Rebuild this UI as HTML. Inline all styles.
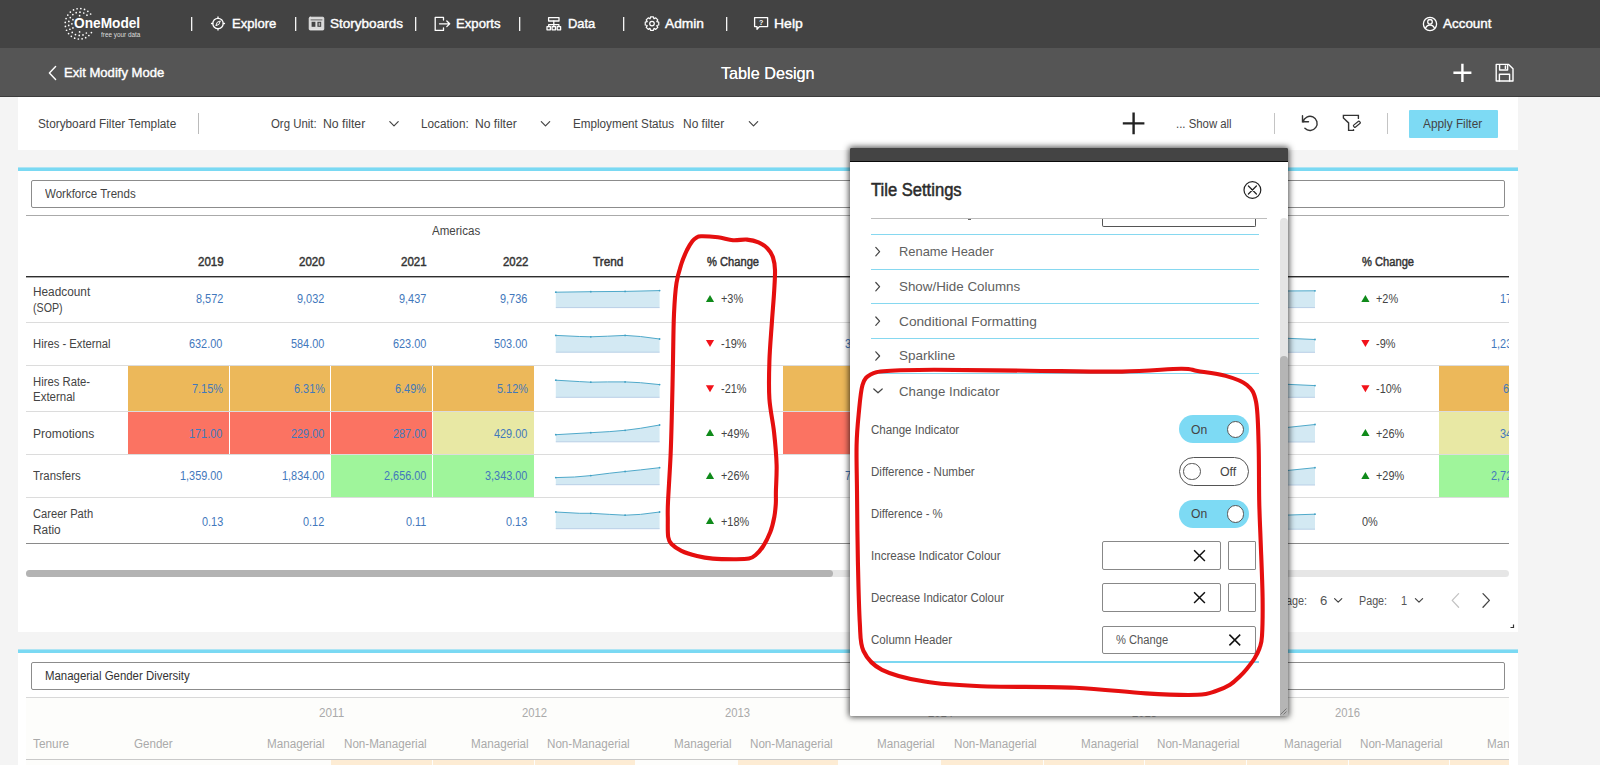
<!DOCTYPE html>
<html><head><meta charset="utf-8"><title>Table Design</title>
<style>
html,body{margin:0;padding:0;}
body{width:1600px;height:765px;overflow:hidden;background:#f4f4f4;font-family:"Liberation Sans",sans-serif;position:relative;}
.a{position:absolute;box-sizing:border-box;}
.t{position:absolute;white-space:nowrap;transform-origin:0 50%;display:block;}
svg{position:absolute;overflow:visible;}
</style></head><body>
<div class="a " style="left:0px;top:0px;width:1600px;height:48px;background:#434343;"></div>
<div class="a " style="left:0px;top:48px;width:1600px;height:49px;background:#555555;"></div>
<div class="a " style="left:0px;top:96px;width:1600px;height:1px;background:#3c3c3c;"></div>
<svg style="left:0;top:0" width="200" height="48" fill="#fff"><circle cx="91.40" cy="32.56" r="0.85"/><circle cx="88.86" cy="35.49" r="0.85"/><circle cx="85.69" cy="37.63" r="0.85"/><circle cx="82.10" cy="38.83" r="0.85"/><circle cx="78.34" cy="39.01" r="0.85"/><circle cx="74.67" cy="38.14" r="0.85"/><circle cx="71.34" cy="36.30" r="0.85"/><circle cx="68.57" cy="33.61" r="0.85"/><circle cx="66.55" cy="30.25" r="0.85"/><circle cx="65.42" cy="26.45" r="0.85"/><circle cx="65.25" cy="22.47" r="0.85"/><circle cx="66.07" cy="18.58" r="0.85"/><circle cx="67.80" cy="15.04" r="0.85"/><circle cx="70.34" cy="12.11" r="0.85"/><circle cx="73.51" cy="9.97" r="0.85"/><circle cx="77.10" cy="8.77" r="0.85"/><circle cx="80.86" cy="8.59" r="0.85"/><circle cx="84.53" cy="9.46" r="0.85"/><circle cx="87.86" cy="11.30" r="0.85"/><circle cx="90.63" cy="13.99" r="0.85"/><circle cx="86.37" cy="32.99" r="0.85"/><circle cx="83.00" cy="34.89" r="0.85"/><circle cx="79.22" cy="35.45" r="0.85"/><circle cx="75.48" cy="34.61" r="0.85"/><circle cx="72.24" cy="32.47" r="0.85"/><circle cx="69.89" cy="29.27" r="0.85"/><circle cx="68.71" cy="25.42" r="0.85"/><circle cx="68.84" cy="21.38" r="0.85"/><circle cx="70.27" cy="17.62" r="0.85"/><circle cx="72.83" cy="14.61" r="0.85"/><circle cx="76.20" cy="12.71" r="0.85"/><circle cx="79.98" cy="12.15" r="0.85"/><circle cx="83.72" cy="12.99" r="0.85"/><circle cx="86.96" cy="15.13" r="0.85"/><circle cx="79.60" cy="31.96" r="0.85"/><circle cx="72.93" cy="27.88" r="0.85"/><circle cx="71.90" cy="23.80" r="0.85"/><circle cx="72.93" cy="19.72" r="0.85"/><circle cx="79.60" cy="15.64" r="0.85"/></svg>
<span class="t" style="left:74.08px;top:12.00px;font-size:15px;line-height:21px;font-weight:bold;color:#fff;transform:scaleX(0.9127);">OneModel</span>
<span class="t" style="left:100.62px;top:30.00px;font-size:7px;line-height:10px;font-weight:normal;color:#ddd;transform:scaleX(0.9108);">free your data</span>
<div class="a " style="left:191px;top:16.5px;width:1px;height:14px;background:#f4f4f4;"></div>
<div class="a " style="left:192px;top:16.5px;width:1px;height:14px;background:rgba(255,255,255,0.3);"></div>
<div class="a " style="left:295px;top:16.5px;width:1px;height:14px;background:#f4f4f4;"></div>
<div class="a " style="left:296px;top:16.5px;width:1px;height:14px;background:rgba(255,255,255,0.3);"></div>
<div class="a " style="left:415px;top:16.5px;width:1px;height:14px;background:#f4f4f4;"></div>
<div class="a " style="left:416px;top:16.5px;width:1px;height:14px;background:rgba(255,255,255,0.3);"></div>
<div class="a " style="left:519px;top:16.5px;width:1px;height:14px;background:#f4f4f4;"></div>
<div class="a " style="left:520px;top:16.5px;width:1px;height:14px;background:rgba(255,255,255,0.3);"></div>
<div class="a " style="left:623px;top:16.5px;width:1px;height:14px;background:#f4f4f4;"></div>
<div class="a " style="left:624px;top:16.5px;width:1px;height:14px;background:rgba(255,255,255,0.3);"></div>
<div class="a " style="left:726px;top:16.5px;width:1px;height:14px;background:#f4f4f4;"></div>
<div class="a " style="left:727px;top:16.5px;width:1px;height:14px;background:rgba(255,255,255,0.3);"></div>
<svg style="left:0;top:0" width="1600" height="48" fill="none" stroke="#fff" stroke-width="1.3" stroke-linecap="round" stroke-linejoin="round"><circle cx="218" cy="23.5" r="5.2"/><path d="M218 17v1.2M218 28.8v1.2M211.5 23.5h1.2M223.3 23.5h1.2"/><path d="M220.2 21.3l-1.3 3.1-3.1 1.3 1.3-3.1z" stroke-width="1"/><rect x="309.2" y="17.2" width="14.6" height="12.8" rx="1" fill="#dcdcdc" stroke="#eee" stroke-width="0.8"/><path d="M311 19.9h11" stroke="#434343" stroke-width="0.8"/><rect x="311.6" y="21.8" width="3.8" height="5" fill="#434343" stroke="none"/><rect x="317.4" y="21.8" width="3.8" height="5" fill="#434343" stroke="none"/><rect x="318.6" y="22.8" width="1.6" height="3" fill="#aaa" stroke="none"/><path d="M443.5 20v-2.6h-8.3v13h8.3v-2.6"/><path d="M439.5 23.8h10M446.8 21l2.9 2.8-2.9 2.8"/><rect x="548.6" y="17.6" width="10.4" height="3.4"/><path d="M553.8 21v3.6M548.7 26.6v-2h10.2v2M553.8 24.6v2"/><rect x="547" y="26.6" width="3.4" height="3.2"/><rect x="552.1" y="26.6" width="3.4" height="3.2"/><rect x="557.2" y="26.6" width="3.4" height="3.2"/><path d="M754.6 17.6h13v9h-8.2l-2.4 2.6v-2.6h-2.4z"/><circle cx="1430" cy="24" r="6.6"/><circle cx="1430" cy="21.8" r="2.3"/><path d="M1425.4 28.4c1-2.6 2.8-3.4 4.6-3.4s3.6 0.8 4.6 3.4"/></svg>
<span class="t" style="left:758.98px;top:18.00px;font-size:7px;line-height:10px;font-weight:bold;color:#fff;transform:scaleX(1.0069);">?</span>
<svg style="left:0;top:0" width="1600" height="48" fill="none" stroke="#fff" stroke-width="1.2" stroke-linejoin="round"><path d="M658.75 22.16 L658.75 25.04 L656.83 25.53 L656.78 25.65 L657.79 27.35 L655.75 29.39 L654.05 28.38 L653.93 28.43 L653.44 30.35 L650.56 30.35 L650.07 28.43 L649.95 28.38 L648.25 29.39 L646.21 27.35 L647.22 25.65 L647.17 25.53 L645.25 25.04 L645.25 22.16 L647.17 21.67 L647.22 21.55 L646.21 19.85 L648.25 17.81 L649.95 18.82 L650.07 18.77 L650.56 16.85 L653.44 16.85 L653.93 18.77 L654.05 18.82 L655.75 17.81 L657.79 19.85 L656.78 21.55 L656.83 21.67Z"/><circle cx="652" cy="23.6" r="2.3"/></svg>
<span class="t" style="left:232.22px;top:15.00px;font-size:13px;line-height:18px;font-weight:normal;color:#fff;transform:scaleX(1.0052);-webkit-text-stroke:0.4px #fff;">Explore</span>
<span class="t" style="left:329.59px;top:15.00px;font-size:13px;line-height:18px;font-weight:normal;color:#fff;transform:scaleX(1.0409);-webkit-text-stroke:0.4px #fff;">Storyboards</span>
<span class="t" style="left:456.01px;top:15.00px;font-size:13px;line-height:18px;font-weight:normal;color:#fff;transform:scaleX(1.0101);-webkit-text-stroke:0.4px #fff;">Exports</span>
<span class="t" style="left:567.62px;top:15.00px;font-size:13px;line-height:18px;font-weight:normal;color:#fff;transform:scaleX(0.9939);-webkit-text-stroke:0.4px #fff;">Data</span>
<span class="t" style="left:665.17px;top:15.00px;font-size:13px;line-height:18px;font-weight:normal;color:#fff;transform:scaleX(1.0578);-webkit-text-stroke:0.4px #fff;">Admin</span>
<span class="t" style="left:774.16px;top:15.00px;font-size:13px;line-height:18px;font-weight:normal;color:#fff;transform:scaleX(1.0772);-webkit-text-stroke:0.4px #fff;">Help</span>
<span class="t" style="left:1442.99px;top:15.00px;font-size:13px;line-height:18px;font-weight:normal;color:#fff;transform:scaleX(1.0335);-webkit-text-stroke:0.4px #fff;">Account</span>
<svg style="left:0;top:48px" width="1600" height="49" fill="none" stroke="#fff" stroke-linecap="round" stroke-linejoin="round"><path d="M55.6 18.4l-6.2 6.6 6.2 6.6" stroke-width="1.4"/><path d="M1462.4 15.8v18.2M1453.4 24.8h18" stroke-width="2.4" stroke-linecap="butt"/><path d="M1496.2 16.4h12.4l4.4 4.4v12.2h-16.8z" stroke-width="1.4"/><path d="M1499.6 16.6v5.4h8v-5.4M1499.4 33v-6.8h10.2v6.8" stroke-width="1.4"/><path d="M1505.4 18v2.4" stroke-width="1.4"/></svg>
<span class="t" style="left:63.72px;top:64.00px;font-size:13px;line-height:18px;font-weight:normal;color:#fff;transform:scaleX(1.0061);-webkit-text-stroke:0.4px #fff;">Exit Modify Mode</span>
<span class="t" style="left:721.03px;top:62.00px;font-size:17px;line-height:24px;font-weight:normal;color:#fff;transform:scaleX(0.9526);text-shadow:0 0 0.5px #fff;">Table Design</span>
<div class="a " style="left:18px;top:97px;width:1500px;height:53px;background:#fff;"></div>
<span class="t" style="left:38.29px;top:116.00px;font-size:12px;line-height:17px;font-weight:normal;color:#444;transform:scaleX(0.9835);">Storyboard Filter Template</span>
<div class="a " style="left:197.5px;top:113px;width:1px;height:21px;background:#bbb;"></div>
<span class="t" style="left:271.32px;top:116.00px;font-size:12px;line-height:17px;font-weight:normal;color:#444;transform:scaleX(0.9507);">Org Unit:</span>
<span class="t" style="left:323.26px;top:116.00px;font-size:12px;line-height:17px;font-weight:normal;color:#444;transform:scaleX(1.0214);">No filter</span>
<span class="t" style="left:421.30px;top:116.00px;font-size:12px;line-height:17px;font-weight:normal;color:#444;transform:scaleX(0.9790);">Location:</span>
<span class="t" style="left:475.27px;top:116.00px;font-size:12px;line-height:17px;font-weight:normal;color:#444;transform:scaleX(1.0089);">No filter</span>
<span class="t" style="left:573.30px;top:116.00px;font-size:12px;line-height:17px;font-weight:normal;color:#444;transform:scaleX(0.9724);">Employment Status</span>
<span class="t" style="left:682.78px;top:116.00px;font-size:12px;line-height:17px;font-weight:normal;color:#444;transform:scaleX(0.9965);">No filter</span>
<svg style="left:0;top:0" width="1600" height="160" fill="none" stroke="#444" stroke-width="1.2" stroke-linecap="round" stroke-linejoin="round"><path d="M389.8 121.6l4.2 4.2 4.2-4.2"/><path d="M541.3 121.6l4.2 4.2 4.2-4.2"/><path d="M749.3 121.6l4.2 4.2 4.2-4.2"/><path d="M1133.6 112.6v21.6M1122.8 123.4h21.6" stroke="#222" stroke-width="2.4" stroke-linecap="butt"/><path d="M1303.1 121.8A7.1 7.1 0 1 1 1304.9 128.3" stroke="#333" stroke-width="1.4"/><path d="M1302.5 115.8v6h6" stroke="#333" stroke-width="1.4" stroke-linejoin="miter"/><path d="M1358.4 118.4V115.4H1343.4V118L1348.6 122.9V130.4H1353.5V129.6" stroke="#333" stroke-width="1.4" stroke-linejoin="miter"/><rect x="-3.8" y="-1.3" width="7.6" height="2.6" rx="0.7" transform="translate(1356.9 124.2) rotate(-39)" stroke="#333" stroke-width="1.2"/></svg>
<span class="t" style="left:1175.82px;top:116.00px;font-size:12px;line-height:17px;font-weight:normal;color:#444;transform:scaleX(0.9480);">... Show all</span>
<div class="a " style="left:1274px;top:113px;width:1px;height:21px;background:#c4c4c4;"></div>
<div class="a " style="left:1387px;top:113px;width:1px;height:21px;background:#c4c4c4;"></div>
<div class="a " style="left:1409px;top:109.5px;width:88.5px;height:28px;background:#7ddaf4;border-radius:1px;"></div>
<span class="t" style="left:1423.29px;top:116.00px;font-size:12px;line-height:17px;font-weight:normal;color:#444;transform:scaleX(0.9861);">Apply Filter</span>
<div class="a " style="left:18px;top:167px;width:1500px;height:465px;background:#fff;"></div>
<div class="a " style="left:18px;top:167px;width:1500px;height:1px;background:#aee4f3;"></div>
<div class="a " style="left:18px;top:168px;width:1500px;height:3px;background:#7ad9f3;"></div>
<div class="a " style="left:31px;top:180px;width:1474px;height:28px;background:#fff;border:1px solid #8c8c8c;border-radius:2px;"></div>
<span class="t" style="left:45.31px;top:186.00px;font-size:12px;line-height:17px;font-weight:normal;color:#444;transform:scaleX(0.9596);">Workforce Trends</span>
<div class="a " style="left:26px;top:214.5px;width:1483px;height:1px;background:#aaa;"></div>
<div class="a" style="left:26px;top:216px;width:1483px;height:340px;overflow:hidden;">
<span class="t" style="left:169.54px;top:75.00px;font-size:12px;line-height:17px;font-weight:normal;color:#4278bc;transform:scaleX(0.9080);">8,572</span>
<span class="t" style="left:271.14px;top:75.00px;font-size:12px;line-height:17px;font-weight:normal;color:#4278bc;transform:scaleX(0.9080);">9,032</span>
<span class="t" style="left:372.74px;top:75.00px;font-size:12px;line-height:17px;font-weight:normal;color:#4278bc;transform:scaleX(0.9080);">9,437</span>
<span class="t" style="left:474.34px;top:75.00px;font-size:12px;line-height:17px;font-weight:normal;color:#4278bc;transform:scaleX(0.9080);">9,736</span>
<span class="t" style="left:163.48px;top:120.00px;font-size:12px;line-height:17px;font-weight:normal;color:#4278bc;transform:scaleX(0.9080);">632.00</span>
<span class="t" style="left:265.08px;top:120.00px;font-size:12px;line-height:17px;font-weight:normal;color:#4278bc;transform:scaleX(0.9080);">584.00</span>
<span class="t" style="left:366.68px;top:120.00px;font-size:12px;line-height:17px;font-weight:normal;color:#4278bc;transform:scaleX(0.9080);">623.00</span>
<span class="t" style="left:468.28px;top:120.00px;font-size:12px;line-height:17px;font-weight:normal;color:#4278bc;transform:scaleX(0.9080);">503.00</span>
<div class="a " style="left:102px;top:149px;width:101px;height:46px;background:#ecb85a;"></div>
<span class="t" style="left:165.91px;top:165.00px;font-size:12px;line-height:17px;font-weight:normal;color:#4278bc;transform:scaleX(0.9080);">7.15%</span>
<div class="a " style="left:204px;top:149px;width:100px;height:46px;background:#ecb85a;"></div>
<span class="t" style="left:267.51px;top:165.00px;font-size:12px;line-height:17px;font-weight:normal;color:#4278bc;transform:scaleX(0.9080);">6.31%</span>
<div class="a " style="left:305px;top:149px;width:101px;height:46px;background:#ecb85a;"></div>
<span class="t" style="left:369.11px;top:165.00px;font-size:12px;line-height:17px;font-weight:normal;color:#4278bc;transform:scaleX(0.9080);">6.49%</span>
<div class="a " style="left:407px;top:149px;width:101px;height:46px;background:#ecb85a;"></div>
<span class="t" style="left:470.71px;top:165.00px;font-size:12px;line-height:17px;font-weight:normal;color:#4278bc;transform:scaleX(0.9080);">5.12%</span>
<div class="a " style="left:102px;top:195px;width:101px;height:43px;background:#fb7362;"></div>
<span class="t" style="left:163.48px;top:210.00px;font-size:12px;line-height:17px;font-weight:normal;color:#4278bc;transform:scaleX(0.9080);">171.00</span>
<div class="a " style="left:204px;top:195px;width:100px;height:43px;background:#fb7362;"></div>
<span class="t" style="left:265.08px;top:210.00px;font-size:12px;line-height:17px;font-weight:normal;color:#4278bc;transform:scaleX(0.9080);">229.00</span>
<div class="a " style="left:305px;top:195px;width:101px;height:43px;background:#fb7362;"></div>
<span class="t" style="left:366.68px;top:210.00px;font-size:12px;line-height:17px;font-weight:normal;color:#4278bc;transform:scaleX(0.9080);">287.00</span>
<div class="a " style="left:407px;top:195px;width:101px;height:43px;background:#e8e8a4;"></div>
<span class="t" style="left:468.28px;top:210.00px;font-size:12px;line-height:17px;font-weight:normal;color:#4278bc;transform:scaleX(0.9080);">429.00</span>
<span class="t" style="left:154.39px;top:252.00px;font-size:12px;line-height:17px;font-weight:normal;color:#4278bc;transform:scaleX(0.9080);">1,359.00</span>
<span class="t" style="left:255.99px;top:252.00px;font-size:12px;line-height:17px;font-weight:normal;color:#4278bc;transform:scaleX(0.9080);">1,834.00</span>
<div class="a " style="left:305px;top:238px;width:101px;height:43px;background:#9ff59b;"></div>
<span class="t" style="left:357.59px;top:252.00px;font-size:12px;line-height:17px;font-weight:normal;color:#4278bc;transform:scaleX(0.9080);">2,656.00</span>
<div class="a " style="left:407px;top:238px;width:101px;height:43px;background:#9ff59b;"></div>
<span class="t" style="left:459.19px;top:252.00px;font-size:12px;line-height:17px;font-weight:normal;color:#4278bc;transform:scaleX(0.9080);">3,343.00</span>
<span class="t" style="left:175.60px;top:298.00px;font-size:12px;line-height:17px;font-weight:normal;color:#4278bc;transform:scaleX(0.9080);">0.13</span>
<span class="t" style="left:277.20px;top:298.00px;font-size:12px;line-height:17px;font-weight:normal;color:#4278bc;transform:scaleX(0.9080);">0.12</span>
<span class="t" style="left:379.60px;top:298.00px;font-size:12px;line-height:17px;font-weight:normal;color:#4278bc;transform:scaleX(0.9080);">0.11</span>
<span class="t" style="left:480.40px;top:298.00px;font-size:12px;line-height:17px;font-weight:normal;color:#4278bc;transform:scaleX(0.9080);">0.13</span>
<span class="t" style="left:824.94px;top:75.00px;font-size:12px;line-height:17px;font-weight:normal;color:#4278bc;transform:scaleX(0.9080);">4,120</span>
<span class="t" style="left:818.88px;top:120.00px;font-size:12px;line-height:17px;font-weight:normal;color:#4278bc;transform:scaleX(0.9080);">384.00</span>
<div class="a " style="left:757px;top:149px;width:101px;height:46px;background:#ecb85a;"></div>
<span class="t" style="left:827.37px;top:165.00px;font-size:12px;line-height:17px;font-weight:normal;color:#4278bc;transform:scaleX(0.9080);">8.1%</span>
<div class="a " style="left:859px;top:149px;width:101px;height:46px;background:#ecb85a;"></div>
<div class="a " style="left:961px;top:149px;width:100px;height:46px;background:#ecb85a;"></div>
<div class="a " style="left:1062px;top:149px;width:102px;height:46px;background:#ecb85a;"></div>
<div class="a " style="left:757px;top:195px;width:101px;height:43px;background:#fb7362;"></div>
<span class="t" style="left:824.94px;top:210.00px;font-size:12px;line-height:17px;font-weight:normal;color:#4278bc;transform:scaleX(0.9080);">85.00</span>
<div class="a " style="left:859px;top:195px;width:101px;height:43px;background:#fb7362;"></div>
<div class="a " style="left:961px;top:195px;width:100px;height:43px;background:#fb7362;"></div>
<div class="a " style="left:1062px;top:195px;width:102px;height:43px;background:#fb7362;"></div>
<span class="t" style="left:818.88px;top:252.00px;font-size:12px;line-height:17px;font-weight:normal;color:#4278bc;transform:scaleX(0.9080);">712.00</span>
<span class="t" style="left:831.00px;top:298.00px;font-size:12px;line-height:17px;font-weight:normal;color:#4278bc;transform:scaleX(0.9080);">0.09</span>
<span class="t" style="left:1474.28px;top:75.00px;font-size:12px;line-height:17px;font-weight:normal;color:#4278bc;transform:scaleX(0.9080);">17,654</span>
<span class="t" style="left:1465.19px;top:120.00px;font-size:12px;line-height:17px;font-weight:normal;color:#4278bc;transform:scaleX(0.9080);">1,234.00</span>
<div class="a " style="left:1413px;top:149px;width:100px;height:46px;background:#ecb85a;"></div>
<span class="t" style="left:1476.71px;top:165.00px;font-size:12px;line-height:17px;font-weight:normal;color:#4278bc;transform:scaleX(0.9080);">6.99%</span>
<div class="a " style="left:1514px;top:149px;width:101px;height:46px;background:#ecb85a;"></div>
<div class="a " style="left:1616px;top:149px;width:101px;height:46px;background:#ecb85a;"></div>
<div class="a " style="left:1718px;top:149px;width:101px;height:46px;background:#ecb85a;"></div>
<div class="a " style="left:1413px;top:195px;width:100px;height:43px;background:#e8e8a4;"></div>
<span class="t" style="left:1474.28px;top:210.00px;font-size:12px;line-height:17px;font-weight:normal;color:#4278bc;transform:scaleX(0.9080);">341.00</span>
<div class="a " style="left:1514px;top:195px;width:101px;height:43px;background:#e8e8a4;"></div>
<div class="a " style="left:1616px;top:195px;width:101px;height:43px;background:#e8e8a4;"></div>
<div class="a " style="left:1718px;top:195px;width:101px;height:43px;background:#e8e8a4;"></div>
<div class="a " style="left:1413px;top:238px;width:100px;height:43px;background:#9ff59b;"></div>
<span class="t" style="left:1465.19px;top:252.00px;font-size:12px;line-height:17px;font-weight:normal;color:#4278bc;transform:scaleX(0.9080);">2,721.00</span>
<div class="a " style="left:1514px;top:238px;width:101px;height:43px;background:#9ff59b;"></div>
<div class="a " style="left:1616px;top:238px;width:101px;height:43px;background:#9ff59b;"></div>
<div class="a " style="left:1718px;top:238px;width:101px;height:43px;background:#9ff59b;"></div>
<span class="t" style="left:1487.20px;top:298.00px;font-size:12px;line-height:17px;font-weight:normal;color:#4278bc;transform:scaleX(0.9080);">0.11</span>
<div class="a " style="left:0px;top:106px;width:1483px;height:1px;background:#dcdcdc;"></div>
<div class="a " style="left:0px;top:149px;width:1483px;height:1px;background:#dcdcdc;"></div>
<div class="a " style="left:0px;top:195px;width:1483px;height:1px;background:#dcdcdc;"></div>
<div class="a " style="left:0px;top:238px;width:1483px;height:1px;background:#dcdcdc;"></div>
<div class="a " style="left:0px;top:281px;width:1483px;height:1px;background:#dcdcdc;"></div>
<div class="a " style="left:0px;top:327px;width:1483px;height:1px;background:#8a8a8a;"></div>
<div class="a " style="left:0px;top:60px;width:1483px;height:1px;background:#2e2e2e;"></div>
<div class="a " style="left:0px;top:61px;width:1483px;height:1px;background:#a8a8a8;"></div>
<span class="t" style="left:405.81px;top:7.00px;font-size:12px;line-height:17px;font-weight:normal;color:#444;transform:scaleX(0.9630);">Americas</span>
<span class="t" style="left:171.81px;top:38.00px;font-size:12px;line-height:17px;font-weight:normal;color:#333;transform:scaleX(0.9611);-webkit-text-stroke:0.45px #333;">2019</span>
<span class="t" style="left:273.31px;top:38.00px;font-size:12px;line-height:17px;font-weight:normal;color:#333;transform:scaleX(0.9611);-webkit-text-stroke:0.45px #333;">2020</span>
<span class="t" style="left:374.81px;top:38.00px;font-size:12px;line-height:17px;font-weight:normal;color:#333;transform:scaleX(0.9611);-webkit-text-stroke:0.45px #333;">2021</span>
<span class="t" style="left:476.62px;top:38.00px;font-size:12px;line-height:17px;font-weight:normal;color:#333;transform:scaleX(0.9493);-webkit-text-stroke:0.45px #333;">2022</span>
<span class="t" style="left:567.09px;top:38.00px;font-size:12px;line-height:17px;font-weight:normal;color:#333;transform:scaleX(0.9832);-webkit-text-stroke:0.45px #333;">Trend</span>
<span class="t" style="left:680.73px;top:38.00px;font-size:12px;line-height:17px;font-weight:normal;color:#333;transform:scaleX(0.9282);-webkit-text-stroke:0.45px #333;">% Change</span>
<span class="t" style="left:1335.73px;top:38.00px;font-size:12px;line-height:17px;font-weight:normal;color:#333;transform:scaleX(0.9282);-webkit-text-stroke:0.45px #333;">% Change</span>
<span class="t" style="left:7.29px;top:68.00px;font-size:12px;line-height:17px;font-weight:normal;color:#444;transform:scaleX(0.9852);">Headcount</span>
<span class="t" style="left:7.36px;top:84.00px;font-size:12px;line-height:17px;font-weight:normal;color:#444;transform:scaleX(0.8869);">(SOP)</span>
<span class="t" style="left:7.32px;top:120.00px;font-size:12px;line-height:17px;font-weight:normal;color:#444;transform:scaleX(0.9388);">Hires - External</span>
<span class="t" style="left:7.32px;top:158.00px;font-size:12px;line-height:17px;font-weight:normal;color:#444;transform:scaleX(0.9415);">Hires Rate-</span>
<span class="t" style="left:7.31px;top:173.00px;font-size:12px;line-height:17px;font-weight:normal;color:#444;transform:scaleX(0.9575);">External</span>
<span class="t" style="left:7.27px;top:210.00px;font-size:12px;line-height:17px;font-weight:normal;color:#444;transform:scaleX(1.0086);">Promotions</span>
<span class="t" style="left:7.32px;top:252.00px;font-size:12px;line-height:17px;font-weight:normal;color:#444;transform:scaleX(0.9484);">Transfers</span>
<span class="t" style="left:7.33px;top:290.00px;font-size:12px;line-height:17px;font-weight:normal;color:#444;transform:scaleX(0.9292);">Career Path</span>
<span class="t" style="left:7.29px;top:306.00px;font-size:12px;line-height:17px;font-weight:normal;color:#444;transform:scaleX(0.9883);">Ratio</span>
<svg style="left:0;top:0" width="1483" height="340"><path d="M529.8 76.2 L564.8 75.7 L599.1 75.4 L633.6 74.6 L633.6 91.6 L529.8 91.6Z" fill="#d3e9f3" stroke="none"/><path d="M529.8 91.6H633.6" stroke="#b9cfe6" stroke-width="1"/><path d="M529.8 76.2 L564.8 75.7 L599.1 75.4 L633.6 74.6" fill="none" stroke="#4fa9ca" stroke-width="1"/><circle cx="529.8" cy="76.2" r="0.9" fill="#3fa0c4" stroke="none"/><circle cx="564.8" cy="75.7" r="0.9" fill="#3fa0c4" stroke="none"/><circle cx="599.1" cy="75.4" r="0.9" fill="#3fa0c4" stroke="none"/><circle cx="633.6" cy="74.6" r="0.9" fill="#3fa0c4" stroke="none"/><path d="M679.9 85.99999999999997h8.2l-4.1-7z" fill="#0f8a1a"/><path d="M529.8 119.4 L553.7 120.5 L564.8 120.8 L581.7 120.2 L599.1 119.4 L614.4 120.5 L633.6 123.0 L633.6 136.2 L529.8 136.2Z" fill="#d3e9f3" stroke="none"/><path d="M529.8 136.2H633.6" stroke="#b9cfe6" stroke-width="1"/><path d="M529.8 119.4 L553.7 120.5 L564.8 120.8 L581.7 120.2 L599.1 119.4 L614.4 120.5 L633.6 123.0" fill="none" stroke="#4fa9ca" stroke-width="1"/><circle cx="529.8" cy="119.4" r="0.9" fill="#3fa0c4" stroke="none"/><circle cx="564.8" cy="120.8" r="0.9" fill="#3fa0c4" stroke="none"/><circle cx="599.1" cy="119.4" r="0.9" fill="#3fa0c4" stroke="none"/><circle cx="633.6" cy="123.0" r="0.9" fill="#3fa0c4" stroke="none"/><path d="M679.9 124.1h8.2l-4.1 7z" fill="#f2121a"/><path d="M529.8 164.2 L553.7 165.6 L564.8 166.2 L581.7 165.9 L599.1 165.9 L614.4 166.7 L633.6 168.6 L633.6 181.3 L529.8 181.3Z" fill="#d3e9f3" stroke="none"/><path d="M529.8 181.3H633.6" stroke="#b9cfe6" stroke-width="1"/><path d="M529.8 164.2 L553.7 165.6 L564.8 166.2 L581.7 165.9 L599.1 165.9 L614.4 166.7 L633.6 168.6" fill="none" stroke="#4fa9ca" stroke-width="1"/><circle cx="529.8" cy="164.2" r="0.9" fill="#3fa0c4" stroke="none"/><circle cx="564.8" cy="166.2" r="0.9" fill="#3fa0c4" stroke="none"/><circle cx="599.1" cy="165.9" r="0.9" fill="#3fa0c4" stroke="none"/><circle cx="633.6" cy="168.6" r="0.9" fill="#3fa0c4" stroke="none"/><path d="M679.9 169.20000000000002h8.2l-4.1 7z" fill="#f2121a"/><path d="M529.8 218.7 L564.8 216.7 L583.8 215.6 L599.1 214.3 L614.4 212.3 L633.6 209.0 L633.6 225.8 L529.8 225.8Z" fill="#d3e9f3" stroke="none"/><path d="M529.8 225.8H633.6" stroke="#b9cfe6" stroke-width="1"/><path d="M529.8 218.7 L564.8 216.7 L583.8 215.6 L599.1 214.3 L614.4 212.3 L633.6 209.0" fill="none" stroke="#4fa9ca" stroke-width="1"/><circle cx="529.8" cy="218.7" r="0.9" fill="#3fa0c4" stroke="none"/><circle cx="564.8" cy="216.7" r="0.9" fill="#3fa0c4" stroke="none"/><circle cx="599.1" cy="214.3" r="0.9" fill="#3fa0c4" stroke="none"/><circle cx="633.6" cy="209.0" r="0.9" fill="#3fa0c4" stroke="none"/><path d="M679.9 220.1h8.2l-4.1-7z" fill="#0f8a1a"/><path d="M529.8 261.6 L548.5 261.0 L564.8 259.6 L583.8 257.2 L599.1 255.5 L614.4 253.9 L633.6 251.7 L633.6 268.7 L529.8 268.7Z" fill="#d3e9f3" stroke="none"/><path d="M529.8 268.7H633.6" stroke="#b9cfe6" stroke-width="1"/><path d="M529.8 261.6 L548.5 261.0 L564.8 259.6 L583.8 257.2 L599.1 255.5 L614.4 253.9 L633.6 251.7" fill="none" stroke="#4fa9ca" stroke-width="1"/><circle cx="529.8" cy="261.6" r="0.9" fill="#3fa0c4" stroke="none"/><circle cx="564.8" cy="259.6" r="0.9" fill="#3fa0c4" stroke="none"/><circle cx="599.1" cy="255.5" r="0.9" fill="#3fa0c4" stroke="none"/><circle cx="633.6" cy="251.7" r="0.9" fill="#3fa0c4" stroke="none"/><path d="M679.9 263.1h8.2l-4.1-7z" fill="#0f8a1a"/><path d="M529.8 296.0 L553.7 297.3 L564.8 297.3 L583.8 298.4 L599.1 299.2 L614.4 298.4 L633.6 296.0 L633.6 312.7 L529.8 312.7Z" fill="#d3e9f3" stroke="none"/><path d="M529.8 312.7H633.6" stroke="#b9cfe6" stroke-width="1"/><path d="M529.8 296.0 L553.7 297.3 L564.8 297.3 L583.8 298.4 L599.1 299.2 L614.4 298.4 L633.6 296.0" fill="none" stroke="#4fa9ca" stroke-width="1"/><circle cx="529.8" cy="296.0" r="0.9" fill="#3fa0c4" stroke="none"/><circle cx="564.8" cy="297.3" r="0.9" fill="#3fa0c4" stroke="none"/><circle cx="599.1" cy="299.2" r="0.9" fill="#3fa0c4" stroke="none"/><circle cx="633.6" cy="296.0" r="0.9" fill="#3fa0c4" stroke="none"/><path d="M679.9 308.1h8.2l-4.1-7z" fill="#0f8a1a"/><path d="M1185.2 75.6 L1254.5 75.0 L1289.0 74.8 L1289.0 91.6 L1185.2 91.6Z" fill="#d3e9f3" stroke="none"/><path d="M1185.1999999999998 91.6H1289.0" stroke="#b9cfe6" stroke-width="1"/><path d="M1185.2 75.6 L1254.5 75.0 L1289.0 74.8" fill="none" stroke="#4fa9ca" stroke-width="1"/><circle cx="1185.2" cy="75.6" r="0.9" fill="#3fa0c4" stroke="none"/><circle cx="1254.5" cy="75.0" r="0.9" fill="#3fa0c4" stroke="none"/><circle cx="1289.0" cy="74.8" r="0.9" fill="#3fa0c4" stroke="none"/><path d="M1335.3000000000002 85.99999999999997h8.2l-4.1-7z" fill="#0f8a1a"/><path d="M1185.2 120.0 L1254.5 122.0 L1289.0 123.5 L1289.0 136.3 L1185.2 136.3Z" fill="#d3e9f3" stroke="none"/><path d="M1185.1999999999998 136.3H1289.0" stroke="#b9cfe6" stroke-width="1"/><path d="M1185.2 120.0 L1254.5 122.0 L1289.0 123.5" fill="none" stroke="#4fa9ca" stroke-width="1"/><circle cx="1185.2" cy="120.0" r="0.9" fill="#3fa0c4" stroke="none"/><circle cx="1254.5" cy="122.0" r="0.9" fill="#3fa0c4" stroke="none"/><circle cx="1289.0" cy="123.5" r="0.9" fill="#3fa0c4" stroke="none"/><path d="M1335.3000000000002 124.1h8.2l-4.1 7z" fill="#f2121a"/><path d="M1185.2 166.0 L1254.5 168.0 L1289.0 169.6 L1289.0 181.3 L1185.2 181.3Z" fill="#d3e9f3" stroke="none"/><path d="M1185.1999999999998 181.3H1289.0" stroke="#b9cfe6" stroke-width="1"/><path d="M1185.2 166.0 L1254.5 168.0 L1289.0 169.6" fill="none" stroke="#4fa9ca" stroke-width="1"/><circle cx="1185.2" cy="166.0" r="0.9" fill="#3fa0c4" stroke="none"/><circle cx="1254.5" cy="168.0" r="0.9" fill="#3fa0c4" stroke="none"/><circle cx="1289.0" cy="169.6" r="0.9" fill="#3fa0c4" stroke="none"/><path d="M1335.3000000000002 169.20000000000002h8.2l-4.1 7z" fill="#f2121a"/><path d="M1185.2 217.0 L1254.5 212.2 L1289.0 208.5 L1289.0 226 L1185.2 226Z" fill="#d3e9f3" stroke="none"/><path d="M1185.1999999999998 226H1289.0" stroke="#b9cfe6" stroke-width="1"/><path d="M1185.2 217.0 L1254.5 212.2 L1289.0 208.5" fill="none" stroke="#4fa9ca" stroke-width="1"/><circle cx="1185.2" cy="217.0" r="0.9" fill="#3fa0c4" stroke="none"/><circle cx="1254.5" cy="212.2" r="0.9" fill="#3fa0c4" stroke="none"/><circle cx="1289.0" cy="208.5" r="0.9" fill="#3fa0c4" stroke="none"/><path d="M1335.3000000000002 220.1h8.2l-4.1-7z" fill="#0f8a1a"/><path d="M1185.2 260.0 L1254.5 255.2 L1289.0 251.7 L1289.0 269 L1185.2 269Z" fill="#d3e9f3" stroke="none"/><path d="M1185.1999999999998 269H1289.0" stroke="#b9cfe6" stroke-width="1"/><path d="M1185.2 260.0 L1254.5 255.2 L1289.0 251.7" fill="none" stroke="#4fa9ca" stroke-width="1"/><circle cx="1185.2" cy="260.0" r="0.9" fill="#3fa0c4" stroke="none"/><circle cx="1254.5" cy="255.2" r="0.9" fill="#3fa0c4" stroke="none"/><circle cx="1289.0" cy="251.7" r="0.9" fill="#3fa0c4" stroke="none"/><path d="M1335.3000000000002 263.1h8.2l-4.1-7z" fill="#0f8a1a"/><path d="M1185.2 300.0 L1254.5 299.3 L1289.0 298.2 L1289.0 313.2 L1185.2 313.2Z" fill="#d3e9f3" stroke="none"/><path d="M1185.1999999999998 313.2H1289.0" stroke="#b9cfe6" stroke-width="1"/><path d="M1185.2 300.0 L1254.5 299.3 L1289.0 298.2" fill="none" stroke="#4fa9ca" stroke-width="1"/><circle cx="1185.2" cy="300.0" r="0.9" fill="#3fa0c4" stroke="none"/><circle cx="1254.5" cy="299.3" r="0.9" fill="#3fa0c4" stroke="none"/><circle cx="1289.0" cy="298.2" r="0.9" fill="#3fa0c4" stroke="none"/></svg>
<span class="t" style="left:694.60px;top:75.00px;font-size:12px;line-height:17px;font-weight:normal;color:#444;transform:scaleX(0.9080);">+3%</span>
<span class="t" style="left:694.60px;top:120.00px;font-size:12px;line-height:17px;font-weight:normal;color:#444;transform:scaleX(0.9080);">-19%</span>
<span class="t" style="left:694.60px;top:165.00px;font-size:12px;line-height:17px;font-weight:normal;color:#444;transform:scaleX(0.9080);">-21%</span>
<span class="t" style="left:694.60px;top:210.00px;font-size:12px;line-height:17px;font-weight:normal;color:#444;transform:scaleX(0.9080);">+49%</span>
<span class="t" style="left:694.60px;top:252.00px;font-size:12px;line-height:17px;font-weight:normal;color:#444;transform:scaleX(0.9080);">+26%</span>
<span class="t" style="left:694.60px;top:298.00px;font-size:12px;line-height:17px;font-weight:normal;color:#444;transform:scaleX(0.9080);">+18%</span>
<span class="t" style="left:1350.00px;top:75.00px;font-size:12px;line-height:17px;font-weight:normal;color:#444;transform:scaleX(0.9080);">+2%</span>
<span class="t" style="left:1350.00px;top:120.00px;font-size:12px;line-height:17px;font-weight:normal;color:#444;transform:scaleX(0.9080);">-9%</span>
<span class="t" style="left:1350.00px;top:165.00px;font-size:12px;line-height:17px;font-weight:normal;color:#444;transform:scaleX(0.9080);">-10%</span>
<span class="t" style="left:1350.00px;top:210.00px;font-size:12px;line-height:17px;font-weight:normal;color:#444;transform:scaleX(0.9080);">+26%</span>
<span class="t" style="left:1350.00px;top:252.00px;font-size:12px;line-height:17px;font-weight:normal;color:#444;transform:scaleX(0.9080);">+29%</span>
<span class="t" style="left:1335.90px;top:298.00px;font-size:12px;line-height:17px;font-weight:normal;color:#444;transform:scaleX(0.9080);">0%</span>
</div>
<div class="a " style="left:26px;top:570px;width:1483px;height:7px;background:#e6e6e6;border-radius:4px;"></div>
<div class="a " style="left:26px;top:570px;width:807px;height:7px;background:#b3b3b3;border-radius:4px;"></div>
<span class="t" style="left:1231.35px;top:593.00px;font-size:12px;line-height:17px;font-weight:normal;color:#555;transform:scaleX(0.9053);">Rows per page:</span>
<span class="t" style="left:1319.71px;top:593.00px;font-size:12px;line-height:17px;font-weight:normal;color:#555;transform:scaleX(1.0963);">6</span>
<span class="t" style="left:1359.36px;top:593.00px;font-size:12px;line-height:17px;font-weight:normal;color:#555;transform:scaleX(0.8953);">Page:</span>
<span class="t" style="left:1401.34px;top:593.00px;font-size:12px;line-height:17px;font-weight:normal;color:#555;transform:scaleX(0.9136);">1</span>
<svg style="left:0;top:560px" width="1600" height="80" fill="none" stroke-linecap="round" stroke-linejoin="round"><path d="M1334.6 38.6l3.6 3.6 3.6-3.6M1415.4 38.6l3.6 3.6 3.6-3.6" stroke="#444" stroke-width="1.2"/><path d="M1458.6 33.6l-6.4 6.8 6.4 6.8" stroke="#c4c4c4" stroke-width="1.3"/><path d="M1483 33.6l6.4 6.8-6.4 6.8" stroke="#444" stroke-width="1.3"/><path d="M1513.5 64.5v3h-3" stroke="#333" stroke-width="1.2" stroke-linecap="butt" stroke-linejoin="miter"/></svg>
<div class="a " style="left:18px;top:649px;width:1500px;height:116px;background:#fff;"></div>
<div class="a " style="left:18px;top:649px;width:1500px;height:1px;background:#aee4f3;"></div>
<div class="a " style="left:18px;top:650px;width:1500px;height:3px;background:#7ad9f3;"></div>
<div class="a " style="left:31px;top:662px;width:1474px;height:28px;background:#fff;border:1px solid #8c8c8c;border-radius:2px;"></div>
<span class="t" style="left:45.32px;top:668.00px;font-size:12px;line-height:17px;font-weight:normal;color:#333;transform:scaleX(0.9513);">Managerial Gender Diversity</span>
<div class="a " style="left:26px;top:697px;width:1483px;height:1px;background:#d8d8d8;"></div>
<div class="a" style="left:26px;top:698px;width:1483px;height:67px;overflow:hidden;background:#fdfdfb;">
<div class="a " style="left:0px;top:61px;width:1483px;height:1px;background:#c9c9c9;"></div>
<div class="a " style="left:305px;top:62px;width:101px;height:6px;background:#fdecd4;"></div>
<div class="a " style="left:407px;top:62px;width:101px;height:6px;background:#fdecd4;"></div>
<div class="a " style="left:509px;top:62px;width:100px;height:6px;background:#fdecd4;"></div>
<div class="a " style="left:712px;top:62px;width:100px;height:6px;background:#fdecd4;"></div>
<div class="a " style="left:915px;top:62px;width:102px;height:6px;background:#fdecd4;"></div>
<div class="a " style="left:1018px;top:62px;width:100px;height:6px;background:#fdecd4;"></div>
<div class="a " style="left:1119px;top:62px;width:101px;height:6px;background:#fdecd4;"></div>
<div class="a " style="left:1221px;top:62px;width:101px;height:6px;background:#fdecd4;"></div>
<div class="a " style="left:1323px;top:62px;width:100px;height:6px;background:#fdecd4;"></div>
<div class="a " style="left:1424px;top:62px;width:59px;height:6px;background:#fdecd4;"></div>
<span class="t" style="left:292.50px;top:7.00px;font-size:12px;line-height:17px;font-weight:normal;color:#aaa;transform:scaleX(0.9755);">2011</span>
<span class="t" style="left:495.82px;top:7.00px;font-size:12px;line-height:17px;font-weight:normal;color:#aaa;transform:scaleX(0.9415);">2012</span>
<span class="t" style="left:699.12px;top:7.00px;font-size:12px;line-height:17px;font-weight:normal;color:#aaa;transform:scaleX(0.9415);">2013</span>
<span class="t" style="left:902.42px;top:7.00px;font-size:12px;line-height:17px;font-weight:normal;color:#aaa;transform:scaleX(0.9415);">2014</span>
<span class="t" style="left:1105.72px;top:7.00px;font-size:12px;line-height:17px;font-weight:normal;color:#aaa;transform:scaleX(0.9415);">2015</span>
<span class="t" style="left:1309.02px;top:7.00px;font-size:12px;line-height:17px;font-weight:normal;color:#aaa;transform:scaleX(0.9415);">2016</span>
<span class="t" style="left:7.29px;top:38.00px;font-size:12px;line-height:17px;font-weight:normal;color:#aaa;transform:scaleX(0.9862);">Tenure</span>
<span class="t" style="left:108.30px;top:38.00px;font-size:12px;line-height:17px;font-weight:normal;color:#aaa;transform:scaleX(0.9660);">Gender</span>
<span class="t" style="left:241.30px;top:38.00px;font-size:12px;line-height:17px;font-weight:normal;color:#aaa;transform:scaleX(0.9714);">Managerial</span>
<span class="t" style="left:317.80px;top:38.00px;font-size:12px;line-height:17px;font-weight:normal;color:#aaa;transform:scaleX(0.9683);">Non-Managerial</span>
<span class="t" style="left:444.60px;top:38.00px;font-size:12px;line-height:17px;font-weight:normal;color:#aaa;transform:scaleX(0.9714);">Managerial</span>
<span class="t" style="left:521.10px;top:38.00px;font-size:12px;line-height:17px;font-weight:normal;color:#aaa;transform:scaleX(0.9683);">Non-Managerial</span>
<span class="t" style="left:647.90px;top:38.00px;font-size:12px;line-height:17px;font-weight:normal;color:#aaa;transform:scaleX(0.9714);">Managerial</span>
<span class="t" style="left:724.40px;top:38.00px;font-size:12px;line-height:17px;font-weight:normal;color:#aaa;transform:scaleX(0.9683);">Non-Managerial</span>
<span class="t" style="left:851.20px;top:38.00px;font-size:12px;line-height:17px;font-weight:normal;color:#aaa;transform:scaleX(0.9714);">Managerial</span>
<span class="t" style="left:927.70px;top:38.00px;font-size:12px;line-height:17px;font-weight:normal;color:#aaa;transform:scaleX(0.9683);">Non-Managerial</span>
<span class="t" style="left:1054.50px;top:38.00px;font-size:12px;line-height:17px;font-weight:normal;color:#aaa;transform:scaleX(0.9714);">Managerial</span>
<span class="t" style="left:1131.00px;top:38.00px;font-size:12px;line-height:17px;font-weight:normal;color:#aaa;transform:scaleX(0.9683);">Non-Managerial</span>
<span class="t" style="left:1257.80px;top:38.00px;font-size:12px;line-height:17px;font-weight:normal;color:#aaa;transform:scaleX(0.9714);">Managerial</span>
<span class="t" style="left:1334.30px;top:38.00px;font-size:12px;line-height:17px;font-weight:normal;color:#aaa;transform:scaleX(0.9683);">Non-Managerial</span>
<span class="t" style="left:1461.10px;top:38.00px;font-size:12px;line-height:17px;font-weight:normal;color:#aaa;transform:scaleX(0.9714);">Managerial</span>
</div>
<div class="a " style="left:850px;top:148px;width:438px;height:568px;background:#fff;box-shadow:0 0 6px 0.5px rgba(0,0,0,0.72);border-radius:1px;"></div>
<div class="a " style="left:850px;top:148px;width:438px;height:13px;background:#444;border-radius:1px 1px 0 0;"></div>
<div class="a " style="left:850px;top:161px;width:438px;height:1px;background:#0a0a0a;"></div>
<span class="t" style="left:870.50px;top:178.00px;font-size:17.5px;line-height:24px;font-weight:normal;color:#2b2b2b;transform:scaleX(0.9479);-webkit-text-stroke:0.5px #2b2b2b;">Tile Settings</span>
<svg style="left:0;top:0" width="1600" height="765" fill="none" stroke-linecap="round" stroke-linejoin="round"><circle cx="1252.4" cy="190" r="8.4" stroke="#222" stroke-width="1.2"/><path d="M1248.4 186l8 8M1256.4 186l-8 8" stroke="#222" stroke-width="1.2"/></svg>
<div class="a " style="left:871px;top:218px;width:396px;height:1px;background:#bdbdbd;"></div>
<div class="a " style="left:1102px;top:213px;width:154px;height:14px;background:#fff;border:1px solid #555;border-top:none;border-radius:0 0 2px 2px;"></div>
<div class="a " style="left:1102px;top:212px;width:154px;height:6px;background:#fff;"></div>
<div class="a " style="left:871px;top:218px;width:396px;height:1px;background:#bdbdbd;"></div>
<div class="a " style="left:967.5px;top:218.6px;width:3px;height:1.6px;background:#666;"></div>
<div class="a " style="left:871px;top:233.5px;width:388px;height:1.2px;background:#86d8f0;"></div>
<div class="a " style="left:871px;top:268.5px;width:388px;height:1.2px;background:#86d8f0;"></div>
<div class="a " style="left:871px;top:303.0px;width:388px;height:1.2px;background:#86d8f0;"></div>
<div class="a " style="left:871px;top:337.5px;width:388px;height:1.2px;background:#86d8f0;"></div>
<div class="a " style="left:871px;top:372.5px;width:388px;height:1.2px;background:#86d8f0;"></div>
<div class="a " style="left:871px;top:661px;width:388px;height:2px;background:#7cd7f1;"></div>
<span class="t" style="left:898.83px;top:242.00px;font-size:13.5px;line-height:19px;font-weight:normal;color:#606060;transform:scaleX(0.9560);">Rename Header</span>
<span class="t" style="left:898.80px;top:277.00px;font-size:13.5px;line-height:19px;font-weight:normal;color:#606060;transform:scaleX(0.9913);">Show/Hide Columns</span>
<span class="t" style="left:898.78px;top:312.00px;font-size:13.5px;line-height:19px;font-weight:normal;color:#606060;transform:scaleX(1.0144);">Conditional Formatting</span>
<span class="t" style="left:898.79px;top:346.00px;font-size:13.5px;line-height:19px;font-weight:normal;color:#606060;transform:scaleX(0.9995);">Sparkline</span>
<span class="t" style="left:898.81px;top:382.00px;font-size:13.5px;line-height:19px;font-weight:normal;color:#606060;transform:scaleX(0.9797);">Change Indicator</span>
<svg style="left:0;top:0" width="1600" height="765" fill="none" stroke="#444" stroke-width="1.2" stroke-linecap="round" stroke-linejoin="round"><path d="M875.8 247.4l3.8 4.2-3.8 4.2"/><path d="M875.8 282.5l3.8 4.2-3.8 4.2"/><path d="M875.8 317.0l3.8 4.2-3.8 4.2"/><path d="M875.8 351.8l3.8 4.2-3.8 4.2"/><path d="M873.8 389l4.2 3.8 4.2-3.8"/></svg>
<span class="t" style="left:870.81px;top:422.00px;font-size:12px;line-height:17px;font-weight:normal;color:#555;transform:scaleX(0.9647);">Change Indicator</span>
<span class="t" style="left:870.81px;top:464.00px;font-size:12px;line-height:17px;font-weight:normal;color:#555;transform:scaleX(0.9614);">Difference - Number</span>
<span class="t" style="left:870.82px;top:506.00px;font-size:12px;line-height:17px;font-weight:normal;color:#555;transform:scaleX(0.9450);">Difference - %</span>
<span class="t" style="left:870.80px;top:548.00px;font-size:12px;line-height:17px;font-weight:normal;color:#555;transform:scaleX(0.9672);">Increase Indicator Colour</span>
<span class="t" style="left:870.81px;top:590.00px;font-size:12px;line-height:17px;font-weight:normal;color:#555;transform:scaleX(0.9552);">Decrease Indicator Colour</span>
<span class="t" style="left:870.80px;top:632.00px;font-size:12px;line-height:17px;font-weight:normal;color:#555;transform:scaleX(0.9658);">Column Header</span>
<div class="a " style="left:1179px;top:415px;width:69.5px;height:28px;background:#7ddaf4;border-radius:14px;"></div>
<div class="a " style="left:1227px;top:420.7px;width:17.4px;height:17.4px;background:#fff;border-radius:50%;border:1px solid #555;"></div>
<span class="t" style="left:1191.27px;top:422.00px;font-size:12px;line-height:17px;font-weight:normal;color:#444;transform:scaleX(1.0130);">On</span>
<div class="a " style="left:1179px;top:457px;width:69.5px;height:29px;background:#fff;border-radius:14.5px;border:1px solid #555;"></div>
<div class="a " style="left:1183.3px;top:462.90000000000003px;width:17.4px;height:17.4px;background:#fff;border-radius:50%;border:1px solid #555;"></div>
<span class="t" style="left:1219.76px;top:464.00px;font-size:12px;line-height:17px;font-weight:normal;color:#444;transform:scaleX(1.0285);">Off</span>
<div class="a " style="left:1179px;top:500px;width:69.5px;height:28px;background:#7ddaf4;border-radius:14px;"></div>
<div class="a " style="left:1227px;top:505.3px;width:17.4px;height:17.4px;background:#fff;border-radius:50%;border:1px solid #555;"></div>
<span class="t" style="left:1191.27px;top:506.00px;font-size:12px;line-height:17px;font-weight:normal;color:#444;transform:scaleX(1.0130);">On</span>
<div class="a " style="left:1102px;top:541px;width:119px;height:29px;background:#fff;border:1px solid #888;border-radius:2px;"></div>
<div class="a " style="left:1227.5px;top:541px;width:28.5px;height:29px;background:#fff;border:1px solid #888;border-radius:1px;"></div>
<div class="a " style="left:1102px;top:583px;width:119px;height:29px;background:#fff;border:1px solid #888;border-radius:2px;"></div>
<div class="a " style="left:1227.5px;top:583px;width:28.5px;height:29px;background:#fff;border:1px solid #888;border-radius:1px;"></div>
<div class="a " style="left:1102px;top:625.5px;width:154px;height:28.5px;background:#fff;border:1px solid #888;border-radius:2px;"></div>
<span class="t" style="left:1116.33px;top:632.00px;font-size:12px;line-height:17px;font-weight:normal;color:#555;transform:scaleX(0.9300);">% Change</span>
<svg style="left:0;top:0" width="1600" height="765" fill="none" stroke="#111" stroke-width="1.5" stroke-linecap="butt"><path d="M1194.1 550.2l10.8 10.8M1204.9 550.2l-10.8 10.8"/><path d="M1194.1 592.2l10.8 10.8M1204.9 592.2l-10.8 10.8"/><path d="M1229.3999999999999 634.6l10.8 10.8M1240.2 634.6l-10.8 10.8"/></svg>
<div class="a " style="left:1280px;top:218px;width:8px;height:498px;background:#e4e4e4;border-radius:4px 4px 0 0;"></div>
<div class="a " style="left:1280px;top:356px;width:8px;height:360px;background:#b5b5b5;border-radius:4px 4px 0 0;"></div>
<svg style="left:0;top:0" width="1600" height="765" fill="none" stroke="#777" stroke-width="1"><path d="M1280.5 714.5l6-6M1283.5 714.5l3-3"/></svg>
<svg style="left:0;top:0" width="1600" height="765" fill="none" stroke="#e50f0f" stroke-width="4.1" stroke-linecap="round" stroke-linejoin="round"><path d="M701.0 236.3 C704.6 236.2 712.7 236.7 718.0 237.3 C723.3 238.0 728.2 239.8 733.0 240.2 C737.8 240.6 742.8 239.2 747.0 239.6 C751.2 240.0 755.1 240.9 758.5 242.4 C761.9 243.9 765.1 246.0 767.5 248.5 C769.9 251.0 771.8 253.9 773.0 257.5 C774.2 261.1 774.8 264.5 775.0 270.0 C775.2 275.5 774.7 281.7 774.2 290.6 C773.7 299.5 772.6 311.8 771.8 323.5 C771.0 335.2 769.8 348.4 769.4 361.0 C769.0 373.6 768.6 387.0 769.4 398.8 C770.2 410.6 772.8 420.8 774.0 431.8 C775.2 442.8 776.3 454.7 776.6 464.7 C776.9 474.7 776.0 485.4 775.9 492.0 C775.8 498.6 776.1 499.8 775.8 504.0 C775.5 508.2 775.2 512.3 774.3 517.0 C773.4 521.7 772.2 527.1 770.3 532.0 C768.4 536.9 765.5 542.7 763.0 546.5 C760.5 550.3 757.9 553.0 755.6 555.0 C753.3 557.0 752.6 557.9 749.0 558.6 C745.4 559.3 739.7 559.2 733.7 559.2 C727.7 559.2 718.9 559.1 712.8 558.6 C706.7 558.1 702.2 557.3 697.0 556.0 C691.8 554.7 685.6 552.8 681.4 550.8 C677.1 548.8 673.7 546.3 671.5 544.0 C669.3 541.7 668.8 541.0 668.2 537.0 C667.6 533.0 667.8 525.8 667.8 520.0 C667.8 514.2 667.5 512.8 668.0 502.0 C668.5 491.2 669.9 470.7 670.6 455.0 C671.3 439.3 671.6 423.7 672.0 408.0 C672.4 392.3 672.7 376.7 673.0 361.0 C673.3 345.3 673.4 327.0 674.0 314.0 C674.6 301.0 675.2 291.4 676.5 283.0 C677.8 274.6 679.8 269.0 681.5 263.5 C683.2 258.0 685.2 253.8 687.0 250.0 C688.8 246.2 690.9 243.1 692.5 241.0 C694.1 238.9 695.1 238.4 696.5 237.6 C697.9 236.8 697.4 236.4 701.0 236.3"/><path d="M1181.0 368.8 C1168.4 368.9 1147.5 371.3 1122.0 371.6 C1096.5 371.9 1059.3 371.0 1028.0 370.7 C996.7 370.4 957.5 369.8 934.0 369.8 C910.5 369.9 897.6 370.2 887.0 371.0 C876.4 371.8 874.7 372.2 870.6 374.5 C866.5 376.8 864.5 378.2 862.5 385.0 C860.5 391.8 859.6 405.0 858.6 415.0 C857.6 425.0 856.9 432.3 856.6 445.0 C856.3 457.7 856.8 471.6 857.0 491.0 C857.2 510.4 857.4 539.7 857.9 561.7 C858.4 583.7 858.9 607.9 859.8 622.8 C860.7 637.7 859.8 643.2 863.5 651.0 C867.2 658.8 871.8 664.7 882.0 669.8 C892.2 674.9 908.2 678.9 924.7 681.6 C941.2 684.4 956.0 685.3 981.0 686.3 C1006.0 687.3 1047.5 686.5 1075.0 687.7 C1102.5 688.9 1125.3 692.2 1145.7 693.4 C1166.1 694.6 1185.8 695.2 1197.5 694.8 C1209.2 694.4 1210.6 692.7 1216.0 691.0 C1221.4 689.3 1226.1 687.1 1230.0 684.7 C1233.9 682.4 1236.5 679.5 1239.2 676.9 C1242.0 674.3 1244.0 672.3 1246.5 669.2 C1249.0 666.1 1252.3 662.0 1254.5 658.5 C1256.7 655.0 1258.3 651.8 1259.6 648.0 C1260.8 644.2 1261.5 644.3 1262.0 636.0 C1262.5 627.7 1262.8 614.0 1262.6 598.0 C1262.4 582.0 1261.2 556.3 1260.6 540.0 C1260.0 523.7 1259.5 516.0 1259.2 500.0 C1258.9 484.0 1259.1 460.4 1258.6 444.0 C1258.1 427.6 1258.0 411.5 1256.0 401.7 C1254.0 391.9 1252.0 389.3 1246.9 385.0 C1241.9 380.7 1233.9 378.2 1225.7 375.9 C1217.5 373.6 1205.0 372.2 1197.5 371.0 C1190.0 369.8 1193.6 368.7 1181.0 368.8"/></svg>
</body></html>
